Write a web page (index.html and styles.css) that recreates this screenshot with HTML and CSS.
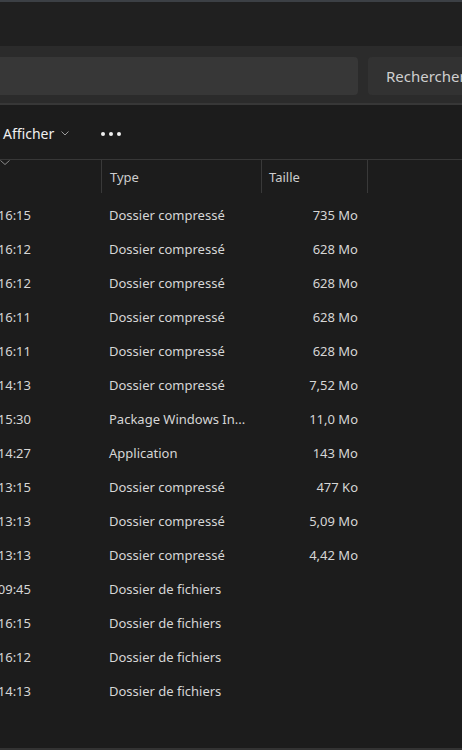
FILE: index.html
```html
<!DOCTYPE html>
<html>
  <head>
    <meta charset="utf-8">
    <meta name="viewport" content="width=device-width, initial-scale=1">
    <title>Explorateur de fichiers</title>
    <link rel="stylesheet" href="styles.css">
  </head>
  <body>
    <div class="window">
      <div class="titlebar"></div>
      <div class="addressbar">
        <div class="search-field"></div>
        <button class="search-button">Rechercher dans Téléchargements</button>
      </div>
      <div class="toolbar">
        <button class="tool">Afficher
          <svg class="chev" width="8" height="5" viewBox="0 0 8 5"><path d="M0.5 0.5 L4 4 L7.5 0.5" fill="none" stroke="#9a9a9a" stroke-width="1"/></svg>
        </button>
        <button class="more"><span></span><span></span><span></span></button>
      </div>
      <div class="list">
        <div class="row head">
          <div class="c-date">
            <svg class="sort" width="10" height="6" viewBox="0 0 10 6"><path d="M0.5 0.5 L5 4.5 L9.5 0.5" fill="none" stroke="#8a8a8a" stroke-width="1"/></svg>
          </div>
          <div class="c-type">Type</div>
          <div class="c-size">Taille</div>
          <div class="c-rest"></div>
        </div>
        <div class="rows">
          <div class="row"><div class="c-date"><span>12/03/2024 16:15</span></div><div class="c-type">Dossier compressé</div><div class="c-size">735 Mo</div></div>
          <div class="row"><div class="c-date"><span>12/03/2024 16:12</span></div><div class="c-type">Dossier compressé</div><div class="c-size">628 Mo</div></div>
          <div class="row"><div class="c-date"><span>12/03/2024 16:12</span></div><div class="c-type">Dossier compressé</div><div class="c-size">628 Mo</div></div>
          <div class="row"><div class="c-date"><span>12/03/2024 16:11</span></div><div class="c-type">Dossier compressé</div><div class="c-size">628 Mo</div></div>
          <div class="row"><div class="c-date"><span>12/03/2024 16:11</span></div><div class="c-type">Dossier compressé</div><div class="c-size">628 Mo</div></div>
          <div class="row"><div class="c-date"><span>11/03/2024 14:13</span></div><div class="c-type">Dossier compressé</div><div class="c-size">7,52 Mo</div></div>
          <div class="row"><div class="c-date"><span>08/03/2024 15:30</span></div><div class="c-type">Package Windows In...</div><div class="c-size">11,0 Mo</div></div>
          <div class="row"><div class="c-date"><span>08/03/2024 14:27</span></div><div class="c-type">Application</div><div class="c-size">143 Mo</div></div>
          <div class="row"><div class="c-date"><span>07/03/2024 13:15</span></div><div class="c-type">Dossier compressé</div><div class="c-size">477 Ko</div></div>
          <div class="row"><div class="c-date"><span>07/03/2024 13:13</span></div><div class="c-type">Dossier compressé</div><div class="c-size">5,09 Mo</div></div>
          <div class="row"><div class="c-date"><span>07/03/2024 13:13</span></div><div class="c-type">Dossier compressé</div><div class="c-size">4,42 Mo</div></div>
          <div class="row"><div class="c-date"><span>06/03/2024 09:45</span></div><div class="c-type">Dossier de fichiers</div><div class="c-size"></div></div>
          <div class="row"><div class="c-date"><span>12/03/2024 16:15</span></div><div class="c-type">Dossier de fichiers</div><div class="c-size"></div></div>
          <div class="row"><div class="c-date"><span>12/03/2024 16:12</span></div><div class="c-type">Dossier de fichiers</div><div class="c-size"></div></div>
          <div class="row"><div class="c-date"><span>11/03/2024 14:13</span></div><div class="c-type">Dossier de fichiers</div><div class="c-size"></div></div>
        </div>
      </div>
      <div class="statusbar"></div>
    </div>
  </body>
</html>
```

FILE: styles.css
```css
body {
  margin: 0;
  background: #1c1c1c;
  font-family: "Noto Sans", "Open Sans", sans-serif;
  font-size: 13px;
  color: #d6d6d6;
  overflow: hidden;
}

.window {
  width: 462px;
  height: 750px;
  display: flex;
  flex-direction: column;
  overflow: hidden;
}

.titlebar {
  height: 44px;
  flex: none;
  background: #202020;
  border-top: 2px solid #3c4045;
}

.addressbar {
  height: 59px;
  flex: none;
  background: #2b2b2b;
  border-bottom: 2px solid #373737;
  display: flex;
  align-items: center;
  gap: 10px;
  padding-top: 3px;
  box-sizing: border-box;
}

.search-field {
  margin-left: -10px;
  width: 368px;
  height: 38px;
  flex: none;
  background: #373737;
  border-radius: 4px;
}

.search-button {
  height: 38px;
  flex: none;
  background: #323232;
  border: 0;
  border-radius: 4px;
  padding: 0 18px;
  color: #cfcfcf;
  font-family: inherit;
  font-size: 15px;
  white-space: nowrap;
  text-align: left;
}

.toolbar {
  height: 55px;
  flex: none;
  display: flex;
  align-items: center;
  gap: 32px;
  padding-top: 2px;
  box-sizing: border-box;
  border-bottom: 1px solid #373737;
}

.tool,
.more {
  background: none;
  border: 0;
  padding: 0;
  color: #f0f0f0;
  font-family: inherit;
  font-size: 14px;
  display: flex;
  align-items: center;
}

.tool {
  margin-left: 3px;
  gap: 7px;
}

.more {
  gap: 4px;
  padding-top: 2px;
}

.more span {
  width: 4px;
  height: 4px;
  border-radius: 50%;
  background: #f0f0f0;
}

.list {
  flex: 1;
}

.row {
  display: flex;
  height: 34px;
  align-items: center;
}

.row.head {
  height: 33px;
  align-items: stretch;
  color: #cdcdcd;
}

.head > div {
  display: flex;
  align-items: center;
  border-right: 1px solid #393939;
  box-sizing: border-box;
}

.head .c-date {
  align-items: flex-start;
}

.head .c-rest {
  border-right: 0;
}

.sort {
  display: block;
}

.rows {
  padding-top: 5px;
}

.c-date {
  width: 102px;
  flex: none;
  overflow: hidden;
  display: flex;
  justify-content: flex-start;
}

.row:not(.head) .c-date {
  width: 31px;
  margin-right: 71px;
  justify-content: flex-end;
  white-space: nowrap;
}

.c-type {
  width: 160px;
  flex: none;
  padding-left: 7px;
  box-sizing: border-box;
  white-space: nowrap;
}

.c-size {
  width: 106px;
  flex: none;
  box-sizing: border-box;
}

.row:not(.head) .c-size {
  width: 96px;
  text-align: right;
}

.head .c-type {
  padding-left: 8px;
}

.head .c-size {
  padding-left: 7px;
}

.c-rest {
  flex: 1;
}

.statusbar {
  height: 2px;
  flex: none;
  background: #333;
}
```
